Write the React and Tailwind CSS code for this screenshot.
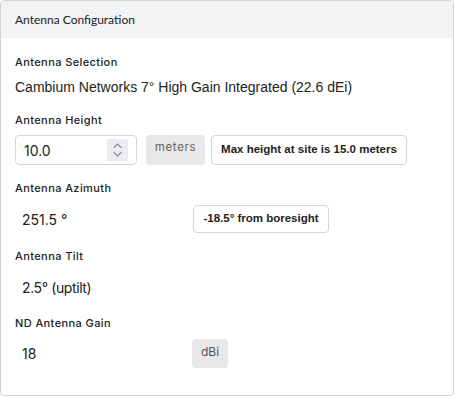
import React from "react";

const label = "text-[11px] leading-[14px] font-medium tracking-[0.4px] text-[#222]";
const inter = { fontFamily: "Inter, 'Noto Sans', sans-serif" };
const arial = { fontFamily: "'Liberation Sans', Arial, sans-serif" };

const Spinner = () => (
  <div className="w-[21px] h-[22px] bg-[#ebebf0] flex items-center justify-center">
    <svg width="11" height="18" viewBox="0 0 11 18" fill="none" stroke="#8a8a96" strokeWidth="1.1" strokeLinecap="round" strokeLinejoin="round">
      <path d="M2 6.5 L5.5 3 L9 6.5" />
      <path d="M2 11.5 L5.5 15 L9 11.5" />
    </svg>
  </div>
);

export default function App() {
  return (
    <div className="w-[455px] h-[398px] bg-white">
      <div className="w-[454px] h-[396px] border border-[#d4d4d4] rounded-[4px] overflow-hidden">
        <div className="h-[37px] bg-[#f2f3f5] flex items-center pl-[14px]">
          <span className="text-[12px] text-[#222]" style={{ fontFamily: "Lato, 'Noto Sans', sans-serif" }}>
            Antenna Configuration
          </span>
        </div>

        <div className="pl-[14px] pt-[17px]" style={inter}>
          <div className={label}>Antenna Selection</div>
          <div className="mt-[8px] h-[20px] leading-[20px] text-[14px] text-[#222]" style={arial}>
            Cambium Networks 7° High Gain Integrated (22.6 dEi)
          </div>

          <div className={`${label} mt-[16px]`}>Antenna Height</div>
          <div className="mt-[8px] flex items-center gap-[9px]">
            <div className="w-[122px] h-[30px] border border-[#d6d6d6] rounded-[4px] flex items-center justify-between pl-[8px] pr-[8px]">
              <span className="text-[14px] text-[#222]">10.0</span>
              <Spinner />
            </div>
            <div className="w-[59px] h-[30px] rounded-[4px] bg-[#e8e8e8] flex justify-center pt-[5px] -mr-[3px]">
              <span className="text-[11.5px] leading-[14px] tracking-[0.7px] text-[#666]">meters</span>
            </div>
            <div className="w-[196px] h-[30px] border border-[#d6d6d6] rounded-[4px] flex items-center justify-center">
              <span className="text-[11.5px] font-semibold text-[#222]" style={arial}>Max height at site is 15.0 meters</span>
            </div>
          </div>

          <div className={`${label} mt-[16px]`}>Antenna Azimuth</div>
          <div className="mt-[10px] flex items-center h-[28px]">
            <span className="w-[178px] pl-[7px] text-[14px] text-[#222]">251.5 °</span>
            <div className="w-[136px] h-[28px] border border-[#d6d6d6] rounded-[4px] flex items-center justify-center">
              <span className="text-[11.5px] font-semibold text-[#222]" style={arial}>-18.5° from boresight</span>
            </div>
          </div>

          <div className={`${label} mt-[16px]`}>Antenna Tilt</div>
          <div className="mt-[15px] h-[20px] leading-[20px] pl-[7px] text-[14px] tracking-[-0.4px] text-[#222]">2.5° (uptilt)</div>

          <div className={`${label} mt-[18px]`}>ND Antenna Gain</div>
          <div className="mt-[9px] flex items-center h-[29px]">
            <span className="w-[177px] pl-[7px] text-[14px] text-[#222]">18</span>
            <div className="w-[36px] h-[29px] rounded-[4px] bg-[#e8e8e8] flex justify-center pt-[6px]">
              <span className="text-[12px] leading-[14px] text-[#555]">dBi</span>
            </div>
          </div>
        </div>
      </div>
    </div>
  );
}
